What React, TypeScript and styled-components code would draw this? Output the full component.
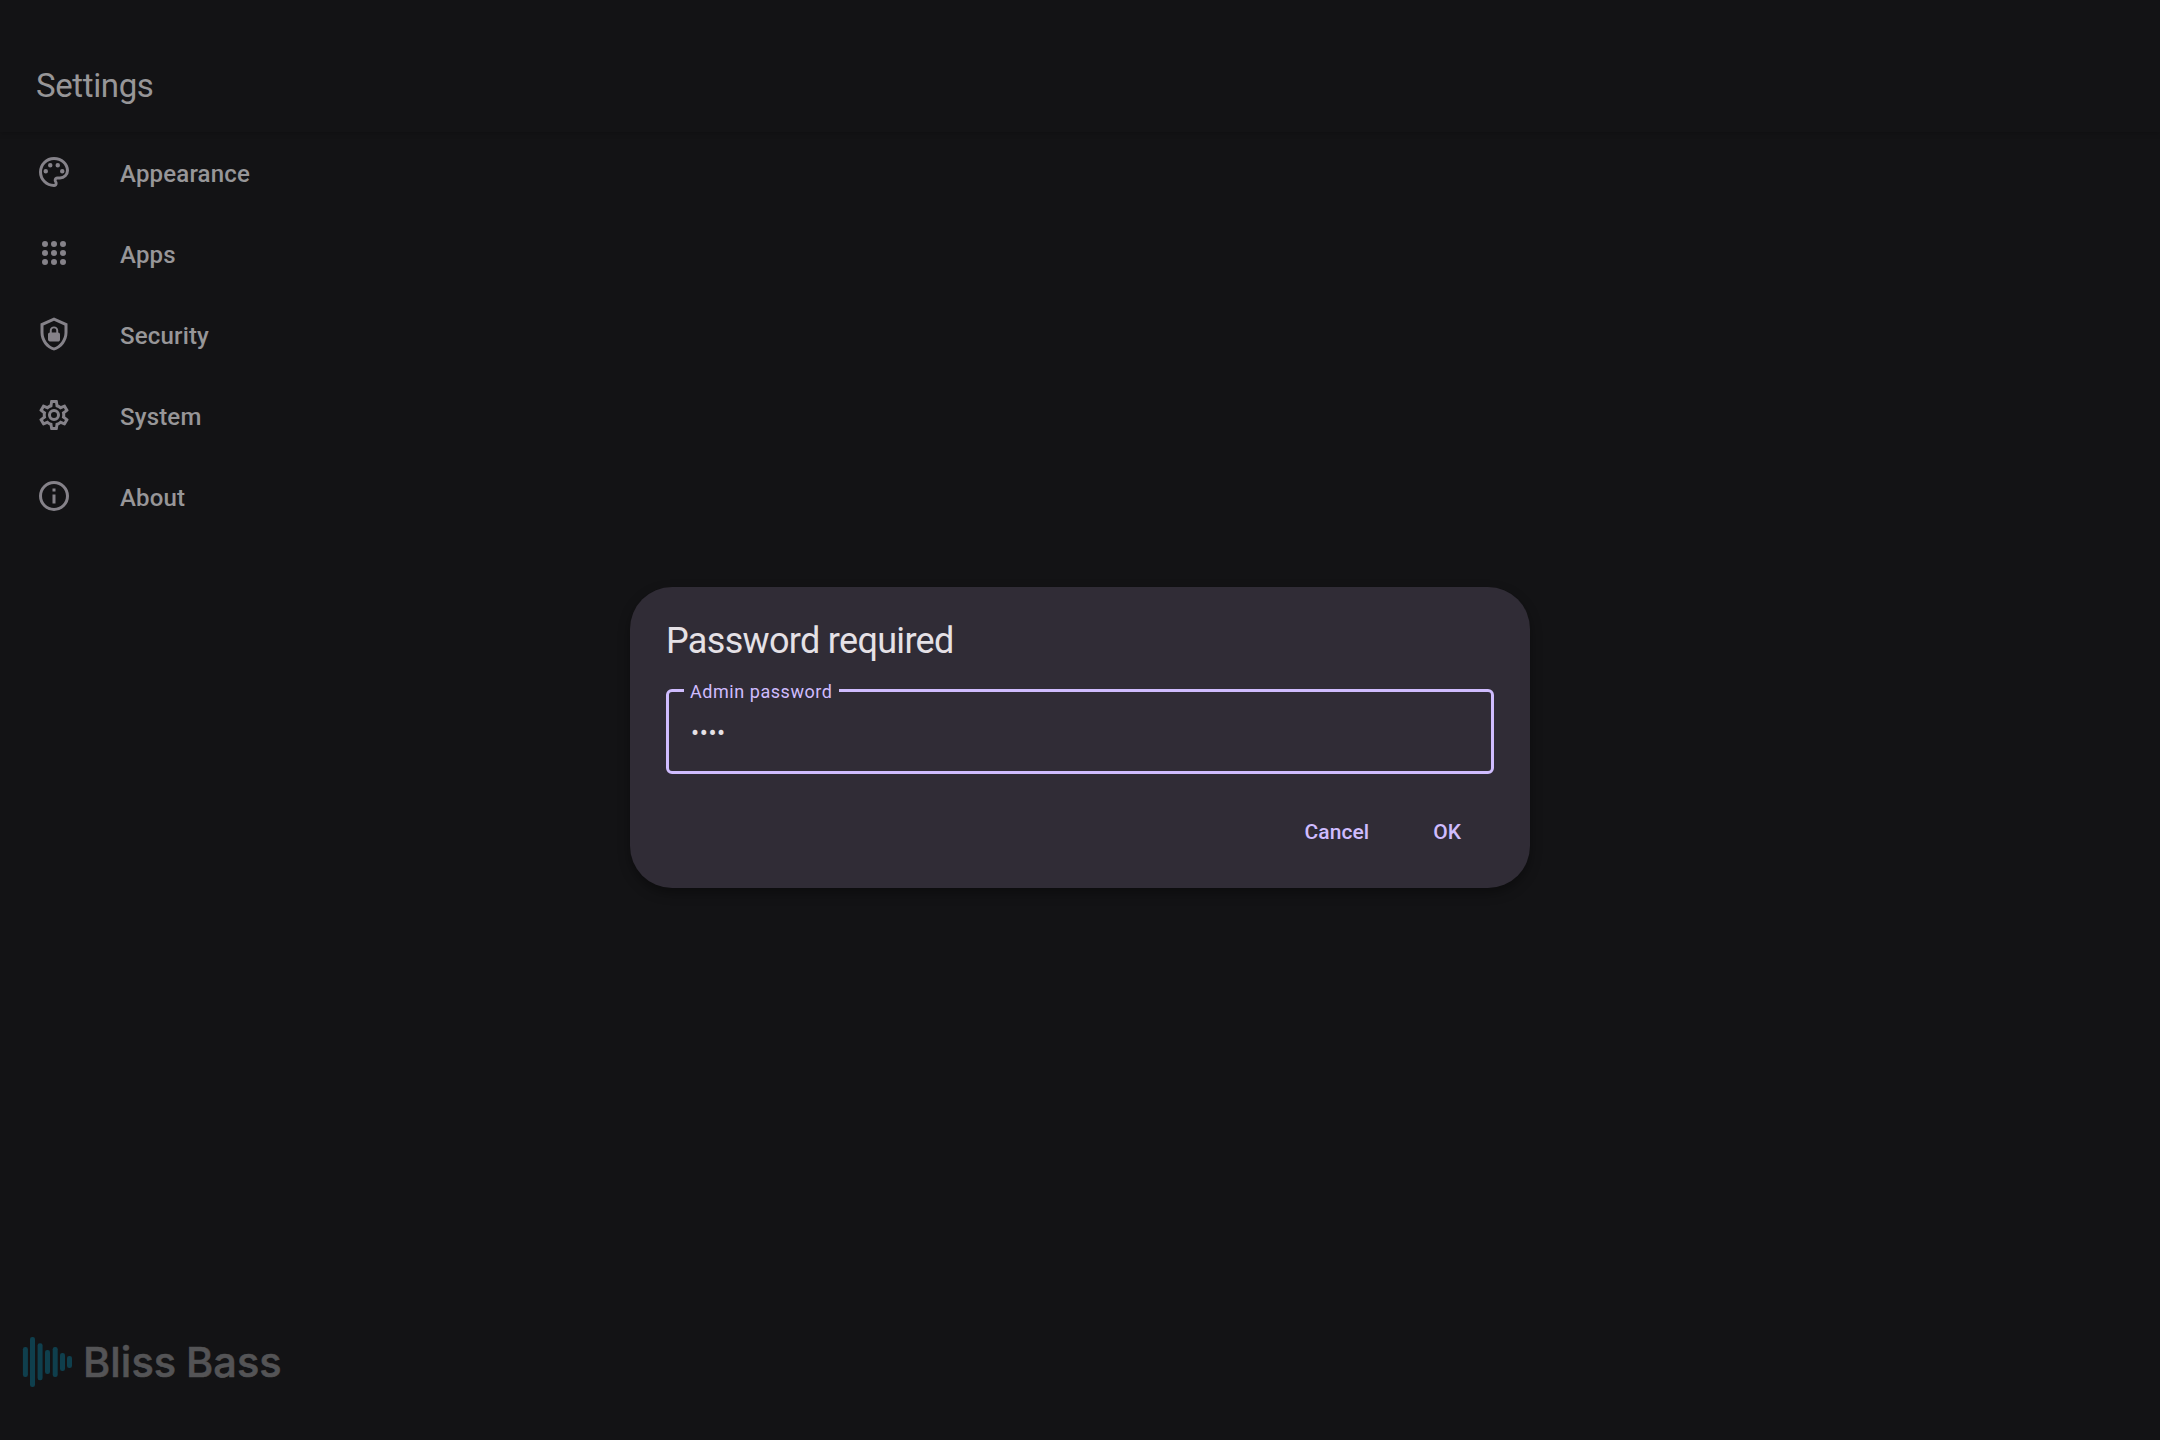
import React from "react";
import styled, { createGlobalStyle } from "styled-components";

const Global = createGlobalStyle`
  * { box-sizing: border-box; }
  html, body, #root { height: 100%; }
  body { margin: 0; background: #131315; font-family: Roboto, sans-serif; }
`;

const Screen = styled.div`
  position: relative;
  display: flex;
  flex-direction: column;
  width: 2160px;
  height: 1440px;
  overflow: hidden;
  background: #131315;
`;

const TopBar = styled.header`
  display: flex;
  align-items: center;
  height: 132px;
  padding: 40px 36px 0;
  box-shadow: 0 2px 5px rgba(0, 0, 0, 0.16);
`;

const PageTitle = styled.h1`
  margin: 0;
  font-size: 33px;
  line-height: 42px;
  font-weight: 400;
  letter-spacing: -0.38px;
  color: #979698;
`;

const Menu = styled.nav`
  display: flex;
  flex-direction: column;
  flex: 1;
`;

const MenuItem = styled.a`
  display: flex;
  align-items: center;
  gap: 48px;
  height: 81px;
  padding: 0 36px 1px;
  color: #979698;
  font-size: 24px;
  font-weight: 500;
  letter-spacing: 0.18px;
`;

const MenuIcon = styled.svg`
  width: 36px;
  height: 36px;
  fill: #858289;
`;

const MenuLabel = styled.span`
  line-height: 36px;
  padding-top: 3px;
`;

const Brand = styled.footer`
  display: flex;
  align-items: center;
  height: 156px;
  padding: 0 0 1px 22px;
  gap: 10px;
`;

const Wave = styled.svg`
  width: 51px;
  height: 52px;
  fill: #0f3f4d;
`;

const BrandName = styled.span`
  font-family: Inter, sans-serif;
  font-size: 41.5px;
  line-height: 50px;
  font-weight: 500;
  letter-spacing: 0.08px;
  word-spacing: -1.5px;
  color: #545456;
  -webkit-text-stroke: 0.6px #545456;
  white-space: nowrap;
`;

const Overlay = styled.div`
  position: absolute;
  inset: 35px 0 0;
  display: flex;
  align-items: center;
  justify-content: center;
`;

const Dialog = styled.section`
  display: flex;
  flex-direction: column;
  width: 900px;
  height: 301px;
  padding: 30px 36px 18px;
  border-radius: 42px;
  background: #302c36;
  box-shadow: 0 5px 12px rgba(0, 0, 0, 0.35);
`;

const DialogTitle = styled.h2`
  margin: 0;
  font-size: 36px;
  line-height: 48px;
  font-weight: 400;
  letter-spacing: -0.68px;
  color: #e5e1e6;
`;

const Field = styled.fieldset`
  min-width: 0;
  height: 96px;
  margin: 13px 0 0;
  padding: 15px 21px 0 22px;
  border: 3px solid #cfbcfe;
  border-radius: 6px;
`;

const FieldLabel = styled.legend`
  width: 155px;
  height: 25px;
  margin-left: -7px;
  padding: 3px 6px 0;
  font-size: 18px;
  line-height: 22px;
  letter-spacing: 0.55px;
  color: #cfbcfe;
  white-space: nowrap;
`;

const PasswordInput = styled.input`
  display: block;
  width: 100%;
  height: 30px;
  padding: 0;
  border: 0;
  outline: 0;
  background: transparent;
  color: #e5e1e6;
  font: 400 24px/30px Roboto, sans-serif;
  letter-spacing: 0.6px;
`;

const Actions = styled.div`
  display: flex;
  justify-content: flex-end;
  gap: 28px;
  margin-top: 22px;
  padding-right: 15px;
`;

const TextButton = styled.button`
  height: 72px;
  padding: 0 18px;
  border: 0;
  background: transparent;
  color: #cfbcfe;
  font: 500 21px/30px Roboto, sans-serif;
  letter-spacing: 0.05px;
`;

const items = [
  {
    label: "Appearance",
    path: "M12,22A10,10 0 0,1 2,12A10,10 0 0,1 12,2C17.5,2 22,6 22,11A6,6 0 0,1 16,17H14.2C13.9,17 13.7,17.2 13.7,17.5C13.7,17.6 13.8,17.7 13.8,17.8C14.2,18.3 14.4,18.9 14.4,19.5C14.5,20.9 13.4,22 12,22M12,4A8,8 0 0,0 4,12A8,8 0 0,0 12,20C12.3,20 12.5,19.8 12.5,19.5C12.5,19.3 12.4,19.2 12.4,19.1C12,18.6 11.8,18.1 11.8,17.5C11.8,16.1 12.9,15 14.3,15H16A4,4 0 0,0 20,11C20,7.1 16.4,4 12,4M6.5,10A1.5,1.5 0 1,1 6.5,13A1.5,1.5 0 1,1 6.5,10M9.5,6A1.5,1.5 0 1,1 9.5,9A1.5,1.5 0 1,1 9.5,6M14.5,6A1.5,1.5 0 1,1 14.5,9A1.5,1.5 0 1,1 14.5,6M17.5,10A1.5,1.5 0 1,1 17.5,13A1.5,1.5 0 1,1 17.5,10Z",
  },
  {
    label: "Apps",
    path: [6, 12, 18].flatMap((y) => [6, 12, 18].map((x) => `M${x - 2},${y}a2,2 0 1,0 4,0a2,2 0 1,0 -4,0`)).join(""),
  },
  {
    label: "Security",
    path: "M21,11C21,16.55 17.16,21.74 12,23C6.84,21.74 3,16.55 3,11V5L12,1L21,5V11M12,21C15.75,20 19,15.54 19,11.22V6.3L12,3.18L5,6.3V11.22C5,15.54 8.25,20 12,21M14.8,11V9.5C14.8,8.1 13.4,7 12,7C10.6,7 9.2,8.1 9.2,9.5V11C8.6,11 8,11.6 8,12.2V15.7C8,16.4 8.6,17 9.2,17H14.7C15.4,17 16,16.4 16,15.8V12.3C16,11.6 15.4,11 14.8,11M13.5,11H10.5V9.5C10.5,8.7 11.2,8.2 12,8.2C12.8,8.2 13.5,8.7 13.5,9.5V11Z",
  },
  {
    label: "System",
    path: "M12,8A4,4 0 0,1 16,12A4,4 0 0,1 12,16A4,4 0 0,1 8,12A4,4 0 0,1 12,8M12,10A2,2 0 0,0 10,12A2,2 0 0,0 12,14A2,2 0 0,0 14,12A2,2 0 0,0 12,10M10,22C9.75,22 9.54,21.82 9.5,21.58L9.13,18.93C8.5,18.68 7.96,18.34 7.44,17.94L4.95,18.95C4.73,19.03 4.46,18.95 4.34,18.73L2.34,15.27C2.21,15.05 2.27,14.78 2.46,14.63L4.57,12.97L4.5,12L4.57,11L2.46,9.37C2.27,9.22 2.21,8.95 2.34,8.73L4.34,5.27C4.46,5.05 4.73,4.96 4.95,5.05L7.44,6.05C7.96,5.66 8.5,5.32 9.13,5.07L9.5,2.42C9.54,2.18 9.75,2 10,2H14C14.25,2 14.46,2.18 14.5,2.42L14.87,5.07C15.5,5.32 16.04,5.66 16.56,6.05L19.05,5.05C19.27,4.96 19.54,5.05 19.66,5.27L21.66,8.73C21.79,8.95 21.73,9.22 21.54,9.37L19.43,11L19.5,12L19.43,13L21.54,14.63C21.73,14.78 21.79,15.05 21.66,15.27L19.66,18.73C19.54,18.95 19.27,19.04 19.05,18.95L16.56,17.95C16.04,18.34 15.5,18.68 14.87,18.93L14.5,21.58C14.46,21.82 14.25,22 14,22H10M11.25,4L10.88,6.61C9.68,6.86 8.62,7.5 7.85,8.39L5.44,7.35L4.69,8.65L6.8,10.2C6.4,11.37 6.4,12.64 6.8,13.8L4.68,15.36L5.43,16.66L7.86,15.62C8.63,16.5 9.68,17.14 10.87,17.38L11.24,20H12.76L13.13,17.39C14.32,17.14 15.37,16.5 16.14,15.62L18.57,16.66L19.32,15.36L17.2,13.81C17.6,12.64 17.6,11.37 17.2,10.2L19.31,8.65L18.56,7.35L16.15,8.39C15.38,7.5 14.32,6.86 13.12,6.62L12.75,4H11.25Z",
  },
  {
    label: "About",
    path: "M11,9H13V7H11M12,20C7.59,20 4,16.41 4,12C4,7.59 7.59,4 12,4C16.41,4 20,7.59 20,12C20,16.41 16.41,20 12,20M12,2A10,10 0 0,0 2,12A10,10 0 0,0 12,22A10,10 0 0,0 22,12A10,10 0 0,0 12,2M11,17H13V11H11V17Z",
  },
];

const bars = [
  { x: 0.9, top: 11, bottom: 41 },
  { x: 8, top: 1, bottom: 51 },
  { x: 15.6, top: 7.3, bottom: 44.3 },
  { x: 23, top: 14, bottom: 38 },
  { x: 30.7, top: 11, bottom: 41 },
  { x: 38, top: 17, bottom: 35 },
  { x: 45, top: 20, bottom: 32 },
];

export default function App() {
  return (
    <>
      <Global />
      <Screen>
        <TopBar>
          <PageTitle>Settings</PageTitle>
        </TopBar>
        <Menu>
          {items.map((item) => (
            <MenuItem key={item.label}>
              <MenuIcon viewBox="0 0 24 24">
                <path d={item.path} fillRule="evenodd" />
              </MenuIcon>
              <MenuLabel>{item.label}</MenuLabel>
            </MenuItem>
          ))}
        </Menu>
        <Brand>
          <Wave viewBox="0 0 51 52">
            {bars.map((b) => (
              <rect key={b.x} x={b.x} y={b.top} width={5} height={b.bottom - b.top} rx={2.2} />
            ))}
          </Wave>
          <BrandName>Bliss Bass</BrandName>
        </Brand>
        <Overlay>
          <Dialog role="dialog">
            <DialogTitle>Password required</DialogTitle>
            <Field>
              <FieldLabel>Admin password</FieldLabel>
              <PasswordInput defaultValue="••••" aria-label="Admin password" />
            </Field>
            <Actions>
              <TextButton>Cancel</TextButton>
              <TextButton>OK</TextButton>
            </Actions>
          </Dialog>
        </Overlay>
      </Screen>
    </>
  );
}
